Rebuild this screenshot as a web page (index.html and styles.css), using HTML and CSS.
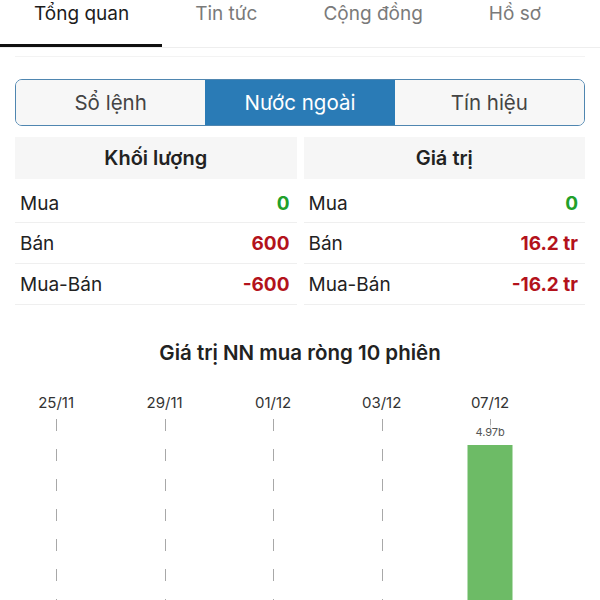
FILE: index.html
```html
<!DOCTYPE html>
<html lang="vi">

<head>
    <meta charset="UTF-8">
    <meta name="viewport" content="width=device-width, initial-scale=1.0">
    <title>Nước ngoài</title>
    <link rel="stylesheet" href="styles.css">
</head>

<body>
    <div class="tabs">
        <div class="tab active">Tổng quan</div>
        <div class="tab">Tin tức</div>
        <div class="tab">Cộng đồng</div>
        <div class="tab">Hồ sơ</div>
    </div>
    <div class="divider"></div>

    <div class="segment">
        <div class="seg">Sổ lệnh</div>
        <div class="seg active">Nước ngoài</div>
        <div class="seg">Tín hiệu</div>
    </div>

    <div class="stats">
        <div class="col">
            <div class="head">Khối lượng</div>
            <div class="row first"><span>Mua</span><b class="up">0</b></div>
            <div class="row"><span>Bán</span><b class="down">600</b></div>
            <div class="row"><span>Mua-Bán</span><b class="down">-600</b></div>
        </div>
        <div class="col">
            <div class="head">Giá trị</div>
            <div class="row first"><span>Mua</span><b class="up">0</b></div>
            <div class="row"><span>Bán</span><b class="down">16.2 tr</b></div>
            <div class="row"><span>Mua-Bán</span><b class="down">-16.2 tr</b></div>
        </div>
    </div>

    <h3 class="chart-title">Giá trị NN mua ròng 10 phiên</h3>

    <div class="chart">
        <div class="slot"><div class="date">25/11</div><div class="plot"><i class="grid"></i></div></div>
        <div class="slot"><div class="date"></div><div class="plot"></div></div>
        <div class="slot"><div class="date">29/11</div><div class="plot"><i class="grid"></i></div></div>
        <div class="slot"><div class="date"></div><div class="plot"></div></div>
        <div class="slot"><div class="date">01/12</div><div class="plot"><i class="grid"></i></div></div>
        <div class="slot"><div class="date"></div><div class="plot"></div></div>
        <div class="slot"><div class="date">03/12</div><div class="plot"><i class="grid"></i></div></div>
        <div class="slot"><div class="date"></div><div class="plot"></div></div>
        <div class="slot"><div class="date">07/12</div>
            <div class="plot"><i class="grid"></i>
                <div class="bar-wrap">
                    <div class="bar-label">4.97b</div>
                    <div class="bar" style="height: 180px"></div>
                </div>
            </div>
        </div>
        <div class="slot"><div class="date"></div><div class="plot"></div></div>
    </div>
</body>

</html>
```

FILE: styles.css
```css
body {
    margin: 0;
    background-color: white;
    font-family: Inter, "Liberation Sans", sans-serif;
    color: #222;
}

/* top tabs */
.tabs {
    display: flex;
    border-bottom: 1px solid #eeeeee;
}

.tab {
    padding: 0 33px 16px 33px;
    line-height: 28px;
    font-size: 19px;
    color: #7a7a7a;
    border-bottom: 3px solid transparent;
}

.tab.active {
    padding-left: 34px;
    color: #1c1c1c;
    border-bottom-color: #111;
}

.divider {
    margin: 8px 15px 0 15px;
    height: 1px;
    background-color: #f3f3f3;
}

/* segmented control */
.segment {
    display: flex;
    margin: 22px 15px 0 15px;
    border: 1.5px solid #4f86b0;
    border-radius: 7px;
    overflow: hidden;
}

.seg {
    flex: 1;
    height: 45px;
    line-height: 45px;
    text-align: center;
    font-size: 20.5px;
    color: #444;
    background-color: #f7f7f7;
}

.seg.active {
    background-color: #2a7bb6;
    color: white;
}

/* volume / value tables */
.stats {
    display: flex;
    gap: 7px;
    margin: 11px 15px 0 15px;
}

.col {
    flex: 1;
}

.head {
    height: 42px;
    line-height: 42px;
    text-align: center;
    font-size: 20px;
    font-weight: 600;
    background-color: #f6f6f6;
}

.row {
    display: flex;
    justify-content: space-between;
    align-items: center;
    height: 40px;
    padding: 0 7px 0 5px;
    font-size: 19px;
    border-bottom: 1px solid #efefef;
}

.row.first {
    height: 38px;
    padding-top: 5px;
}

.row b {
    font-weight: 700;
}

.up {
    color: #22a02a;
}

.down {
    color: #b3121b;
}

/* chart */
.chart-title {
    margin: 36px 0 0 0;
    text-align: center;
    font-size: 20.5px;
    line-height: 24px;
    font-weight: 600;
}

.chart {
    display: grid;
    grid-template-columns: repeat(10, 54.25px);
    margin: 28px 0 0 29px;
}

.slot {
    display: flex;
    flex-direction: column;
    align-items: center;
}

.date {
    height: 20px;
    line-height: 20px;
    font-size: 15px;
    color: #333;
}

.plot {
    position: relative;
    width: 100%;
    height: 200px;
    margin-top: 6px;
}

.grid {
    position: absolute;
    left: 50%;
    top: 0;
    bottom: 0;
    width: 1px;
    background: repeating-linear-gradient(to bottom, #a8a8a8 0 12px, transparent 12px 30px);
}

.bar-wrap {
    position: absolute;
    left: 50%;
    top: 6px;
    transform: translateX(-50%);
    display: flex;
    flex-direction: column;
    align-items: center;
}

.bar-label {
    font-size: 11px;
    line-height: 14px;
    color: #555;
    background-color: rgba(255, 255, 255, 0.6);
}

.bar {
    width: 45px;
    margin-top: 6px;
    background-color: #6dbb66;
}
```
